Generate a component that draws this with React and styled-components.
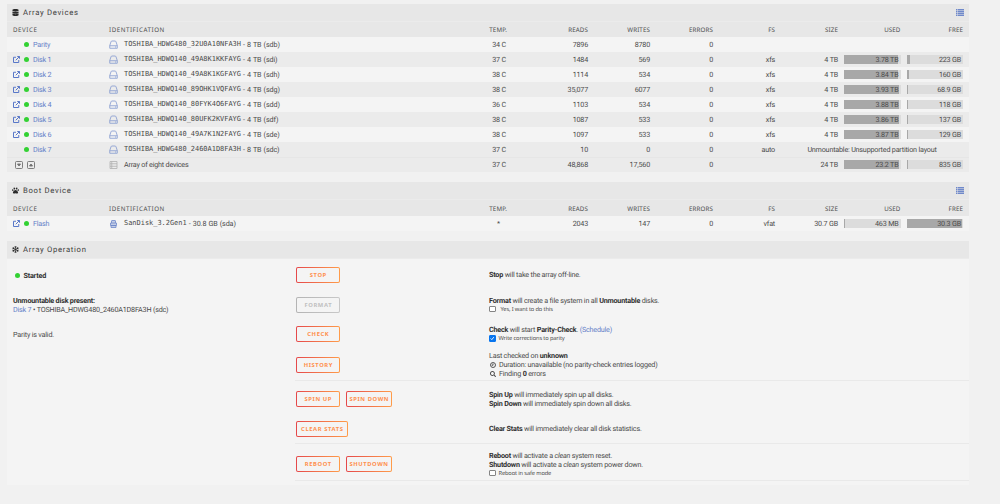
import React from 'react';
import styled, { createGlobalStyle, css } from 'styled-components';
import { FaDatabase, FaPaw, FaRegSnowflake, FaSearch } from 'react-icons/fa';

const GlobalStyle = createGlobalStyle`
  * { box-sizing: border-box; }
  body {
    margin: 0;
    background: #f1f1f1;
    color: #4a4a4a;
    font: 7.2px/9px Roboto, sans-serif;
    letter-spacing: -0.2px;
    text-rendering: geometricPrecision;
    overflow: hidden;
  }
`;

const Page = styled.main`
  width: 962px;
  margin: 4px 0 0 7px;
  display: flex;
  flex-direction: column;
  gap: 10px;
`;

const Panel = styled.section`
  background: #f4f4f4;
`;

const TitleBar = styled.header`
  height: 18px;
  padding: 0 5px 0 4.5px;
  display: flex;
  align-items: center;
  background: #e7e7e7;
  border-bottom: 1px solid #ebebeb;
  font-size: 7.7px;
  letter-spacing: 0.7px;
  color: #404040;
  > svg:first-child { margin-right: 4.5px; color: #2b2b2b; }
`;

const columns = css`
  display: grid;
  grid-template-columns: 96px 336px 62px 81px 62px 63px 62px 63px 62.5px 62.5px;
  align-items: center;
  padding: 0 6px;
`;

const HeadRow = styled.div`
  ${columns}
  height: ${(p) => p.$height || 15}px;
  background: #e7e7e7;
  font: 6.2px/9px "Noto Sans", sans-serif;
  color: #505050;
`;

const Row = styled.div`
  ${columns}
  height: 15px;
  background: ${(p) => (p.$shade ? '#ebebeb' : '#f4f4f4')};
  box-shadow: ${(p) => (p.$total ? 'inset 0 1px #e6e6e6' : 'none')};
`;

const Cell = styled.div`
  white-space: nowrap;
  text-align: ${(p) => (p.$left ? 'left' : 'right')};
`;

const HeadCell = styled(Cell)`
  letter-spacing: ${(p) => (p.$left ? 0.55 : 0.12)}px;
`;

const NumCell = styled(Cell)`
  padding-right: ${(p) => p.$pad || 0}px;
`;

const WideCell = styled.div`
  grid-column: 8 / 11;
  padding-left: 6px;
  text-align: center;
  white-space: nowrap;
`;

const DeviceCell = styled.div`
  display: flex;
  align-items: center;
`;

const IconSlot = styled.span`
  width: 11px;
  display: flex;
`;

const Dot = styled.i`
  width: 5px;
  height: 5px;
  border-radius: 50%;
  background: #33d133;
  margin-right: 4px;
`;

const StartDot = styled(Dot)`
  margin: 0 4px 0 1.5px;
`;

const Link = styled.span`
  color: #6480c8;
`;

const IdCell = styled.div`
  display: flex;
  align-items: center;
  white-space: pre;
  svg { width: 9px; margin-right: 6px; }
`;

const Mono = styled.span`
  font-family: "DejaVu Sans Mono", monospace;
  font-size: 6.95px;
  letter-spacing: 0;
`;

const Tail = styled.span`
  letter-spacing: -0.1px;
  word-spacing: 0.4px;
`;

const Meter = styled.div`
  position: relative;
  height: 9px;
  margin-left: 6px;
  background: #dcdcdc;
  line-height: 9px;
  text-align: right;
  padding-right: 2px;
`;

const MeterFill = styled.div`
  position: absolute;
  inset: 0 auto 0 0;
  background: #a8a8a8;
`;

const MeterText = styled.span`
  position: relative;
`;

const MoveButtons = styled.div`
  display: flex;
  gap: 4px;
  padding-left: 2px;
`;

const Operations = styled.div`
  height: 226px;
`;

const OpRow = styled.div`
  display: grid;
  grid-template-columns: 289px 193px 1fr;
  align-items: center;
  height: ${(p) => p.$height}px;
  padding-top: ${(p) => p.$top || 0}px;
`;

const Divider = styled.hr`
  height: 1px;
  margin: 0 0 0 288px;
  border: 0;
  background: #e9e9e9;
`;

const Status = styled.div`
  padding: 1px 0 0 6px;
  line-height: 9px;
  display: ${(p) => (p.$inline ? 'flex' : 'block')};
  align-items: center;
  b { color: #303030; }
`;

const Note = styled.div`
  white-space: nowrap;
  b { color: #303030; }
`;

const Line = styled.div`
  height: 9px;
  line-height: 9px;
  display: ${(p) => (p.$icon ? 'flex' : 'block')};
  align-items: center;
  white-space: pre;
  svg { margin: 0 3px 0 1px; }
`;

const Buttons = styled.div`
  display: flex;
  gap: 6px;
`;

const Button = styled.button`
  width: ${(p) => p.$width || 44}px;
  height: 16px;
  padding: 0;
  border: 1px solid transparent;
  border-radius: 2px;
  background:
    linear-gradient(#f4f4f4, #f4f4f4) padding-box,
    ${(p) => (p.disabled ? 'linear-gradient(90deg, #b4b4b4, #c8c8c8)' : 'linear-gradient(90deg, #e5484a, #ff9c4a)')} border-box;
  color: ${(p) => (p.disabled ? '#c0c0c0' : '#ff8f4d')};
  font: 700 5.8px/14px "Noto Sans", sans-serif;
  letter-spacing: 0.6px;
  text-indent: 0.6px;
  white-space: nowrap;
`;

const CheckLine = styled.label`
  display: flex;
  align-items: center;
  height: 9px;
  font: 5.7px/9px "Noto Sans", sans-serif;
  letter-spacing: -0.13px;
  gap: ${(p) => p.$gap || 3}px;
`;

const Box = styled.span`
  width: 6.5px;
  height: 6.5px;
  border: 0.8px solid ${(p) => (p.$on ? '#0875ee' : '#858585')};
  border-radius: 1px;
  background: ${(p) => (p.$on ? '#0875ee' : '#fff')};
  display: flex;
`;

const ListToggle = styled.span`
  margin-left: auto;
  display: flex;
`;

const ListIcon = () => (
  <ListToggle>
    <svg width="8" height="7" viewBox="0 0 16 14" fill="#7089ca">
      <path d="M0 0h3v3H0zM4 0h12v3H4zM0 3.800h3v2.800H0zM4 3.800h12v2.800H4zM0 7.400h3v2.800H0zM4 7.400h12v2.800H4zM0 11h3v3H0zM4 11h12v3H4z" />
    </svg>
  </ListToggle>
);

const External = () => (
  <svg width="7" height="7" viewBox="0 0 14 14" fill="none" stroke="#5877c8" strokeWidth="2">
    <path d="M6 2.500H1v10.500h10.500V8M8.500 1H13v4.500M13 1 5.500 8.500" />
  </svg>
);

const Drive = () => (
  <svg height="9" viewBox="0 0 18 18" fill="none" stroke="#8298cf" strokeWidth="1.6">
    <path d="M1.500 11 4 3.500Q4.500 2 6 2h6q1.500 0 2 1.500L16.500 11v5.500h-15zM1.500 11.500h15M12 14h2" />
  </svg>
);

const Usb = () => (
  <svg height="8" viewBox="0 0 16 16" fill="#c3cde6" stroke="#7089c9" strokeWidth="1.6">
    <path d="M4 6V2q0-1 1-1h6q1 0 1 1v4M2 6h12v5H2zM3 11h10v4H3z" />
  </svg>
);

const Stack = () => (
  <svg height="8" viewBox="0 0 16 16" fill="none" stroke="#b0b0b0" strokeWidth="1.6">
    <path d="M1 1h14v14H1zM1 5.500h14M1 10.500h14M4.500 1v14" />
  </svg>
);

const Caret = ({ up }) => (
  <svg width="8" height="8" viewBox="0 0 16 16" fill="none" stroke="#707070" strokeWidth="1.8">
    <rect x="1" y="1" width="14" height="14" rx="2" />
    <path d={up ? 'M5 10h6L8 6z' : 'M5 6h6l-3 4z'} fill="#707070" />
  </svg>
);

const Clock = () => (
  <svg width="6" height="6" viewBox="0 0 12 12" fill="none" stroke="#3c3c3c" strokeWidth="1.7">
    <circle cx="6" cy="6" r="5" />
    <path d="M6 3v3.500H3.500" />
  </svg>
);

const Tick = () => (
  <svg width="5" height="5" viewBox="0 0 10 10" fill="none" stroke="#fff" strokeWidth="2">
    <path d="m1.500 5 2.500 2.500 4.500-5.500" />
  </svg>
);

const HEADINGS = ['DEVICE', 'IDENTIFICATION', 'TEMP.', 'READS', 'WRITES', 'ERRORS', 'FS', 'SIZE', 'USED', 'FREE'];

const DISKS = [
  { name: 'Parity', id: 'TOSHIBA_HDWG480_32U0A10NFA3H', tail: ' - 8 TB (sdb)', nums: ['34 C', '7896', '8780', '0'] },
  { name: 'Disk 1', open: true, id: 'TOSHIBA_HDWQ140_49A8K1KKFAYG', tail: ' - 4 TB (sdi)', nums: ['37 C', '1484', '569', '0'], fs: 'xfs', size: '4 TB', used: ['3.78 TB', 95], free: ['223 GB', 6] },
  { name: 'Disk 2', open: true, id: 'TOSHIBA_HDWQ140_49A8K1KGFAYG', tail: ' - 4 TB (sdh)', nums: ['38 C', '1114', '534', '0'], fs: 'xfs', size: '4 TB', used: ['3.84 TB', 96], free: ['160 GB', 4] },
  { name: 'Disk 3', open: true, id: 'TOSHIBA_HDWQ140_89OHK1VQFAYG', tail: ' - 4 TB (sdg)', nums: ['38 C', '35,077', '6077', '0'], fs: 'xfs', size: '4 TB', used: ['3.93 TB', 98], free: ['68.9 GB', 2] },
  { name: 'Disk 4', open: true, id: 'TOSHIBA_HDWQ140_80FYK4O6FAYG', tail: ' - 4 TB (sdd)', nums: ['36 C', '1103', '534', '0'], fs: 'xfs', size: '4 TB', used: ['3.88 TB', 97], free: ['118 GB', 3] },
  { name: 'Disk 5', open: true, id: 'TOSHIBA_HDWQ140_80UFK2KVFAYG', tail: ' - 4 TB (sdf)', nums: ['38 C', '1087', '533', '0'], fs: 'xfs', size: '4 TB', used: ['3.86 TB', 97], free: ['137 GB', 3] },
  { name: 'Disk 6', open: true, id: 'TOSHIBA_HDWQ140_49A7K1N2FAYG', tail: ' - 4 TB (sde)', nums: ['38 C', '1097', '533', '0'], fs: 'xfs', size: '4 TB', used: ['3.87 TB', 97], free: ['129 GB', 3] },
  { name: 'Disk 7', id: 'TOSHIBA_HDWG480_2460A1D8FA3H', tail: ' - 8 TB (sdc)', nums: ['37 C', '10', '0', '0'], fs: 'auto', message: 'Unmountable: Unsupported partition layout' },
];

const TOTAL = { nums: ['37 C', '48,868', '17,560', '0'], size: '24 TB', used: ['23.2 TB', 97], free: ['835 GB', 3] };

const FLASH = { name: 'Flash', open: true, usb: true, id: 'SanDisk_3.2Gen1', tail: ' - 30.8 GB (sda)', nums: ['*', '2043', '147', '0'], fs: 'vfat', size: '30.7 GB', used: ['463 MB', 2], free: ['30.3 GB', 98] };

function Usage({ value: [text, percent] }) {
  return (
    <Meter>
      <MeterFill style={{ width: `${percent}%` }} />
      <MeterText>{text}</MeterText>
    </Meter>
  );
}

function Headings({ height }) {
  return (
    <HeadRow $height={height}>
      {HEADINGS.map((h, i) => <HeadCell key={h} $left={i < 2}>{h}</HeadCell>)}
    </HeadRow>
  );
}

function Values({ item }) {
  return (
    <>
      {item.nums.map((n, i) => <NumCell key={i} $pad={i ? 0 : n === '*' ? 7 : 1}>{n}</NumCell>)}
      <Cell>{item.fs}</Cell>
      {item.message && <WideCell>{item.message}</WideCell>}
      {item.size && <Cell>{item.size}</Cell>}
      {item.used && <Usage value={item.used} />}
      {item.free && <Usage value={item.free} />}
    </>
  );
}

function DeviceRow({ item, shade }) {
  return (
    <Row $shade={shade}>
      <DeviceCell>
        <IconSlot>{item.open && <External />}</IconSlot>
        <Dot />
        <Link>{item.name}</Link>
      </DeviceCell>
      <IdCell>
        {item.usb ? <Usb /> : <Drive />}
        <Mono>{item.id}</Mono>
        <Tail>{item.tail}</Tail>
      </IdCell>
      <Values item={item} />
    </Row>
  );
}

export default function App() {
  return (
    <>
      <GlobalStyle />
      <Page>
        <Panel>
          <TitleBar><FaDatabase size={7} />Array Devices<ListIcon /></TitleBar>
          <Headings />
          {DISKS.map((d, i) => <DeviceRow key={d.name} item={d} shade={i % 2 === 1} />)}
          <Row $shade $total>
            <MoveButtons><Caret /><Caret up /></MoveButtons>
            <IdCell><Stack />Array of eight devices</IdCell>
            <Values item={TOTAL} />
          </Row>
        </Panel>

        <Panel>
          <TitleBar><FaPaw size={7} />Boot Device<ListIcon /></TitleBar>
          <Headings height={16} />
          <DeviceRow item={FLASH} />
        </Panel>

        <Panel>
          <TitleBar><FaRegSnowflake size={7} />Array Operation</TitleBar>
          <Operations>
            <OpRow $height={31}>
              <Status $inline><StartDot /><b>Started</b></Status>
              <Buttons><Button>STOP</Button></Buttons>
              <Note><b>Stop</b> will take the array off-line.</Note>
            </OpRow>
            <OpRow $height={29}>
              <Status><b>Unmountable disk present:</b><br /><Link>Disk 7</Link> • TOSHIBA_HDWG480_2460A1D8FA3H (sdc)</Status>
              <Buttons><Button disabled>FORMAT</Button></Buttons>
              <Note>
                <Line><b>Format</b> will create a file system in all <b>Unmountable</b> disks.</Line>
                <CheckLine $gap={5}><Box />Yes, I want to do this</CheckLine>
              </Note>
            </OpRow>
            <OpRow $height={30}>
              <Status>Parity is valid.</Status>
              <Buttons><Button>CHECK</Button></Buttons>
              <Note>
                <Line><b>Check</b> will start <b>Parity-Check</b>. <Link>(Schedule)</Link></Line>
                <CheckLine><Box $on><Tick /></Box>Write corrections to parity</CheckLine>
              </Note>
            </OpRow>
            <OpRow $height={31}>
              <span />
              <Buttons><Button>HISTORY</Button></Buttons>
              <Note>
                <Line>Last checked on <b>unknown</b></Line>
                <Line $icon><Clock />Duration: unavailable (no parity-check entries logged)</Line>
                <Line $icon><FaSearch size={6} />Finding <b>0</b> errors</Line>
              </Note>
            </OpRow>
            <Divider />
            <OpRow $height={33} $top={3}>
              <span />
              <Buttons><Button>SPIN UP</Button><Button $width={46}>SPIN DOWN</Button></Buttons>
              <Note>
                <Line><b>Spin Up</b> will immediately spin up all disks.</Line>
                <Line><b>Spin Down</b> will immediately spin down all disks.</Line>
              </Note>
            </OpRow>
            <OpRow $height={29}>
              <span />
              <Buttons><Button $width={52}>CLEAR STATS</Button></Buttons>
              <Note><b>Clear Stats</b> will immediately clear all disk statistics.</Note>
            </OpRow>
            <Divider />
            <OpRow $height={36} $top={4}>
              <span />
              <Buttons><Button>REBOOT</Button><Button $width={45.5}>SHUTDOWN</Button></Buttons>
              <Note>
                <Line><b>Reboot</b> will activate a <i>clean</i> system reset.</Line>
                <Line><b>Shutdown</b> will activate a <i>clean</i> system power down.</Line>
                <CheckLine><Box />Reboot in safe mode</CheckLine>
              </Note>
            </OpRow>
            <Divider />
          </Operations>
        </Panel>
      </Page>
    </>
  );
}
